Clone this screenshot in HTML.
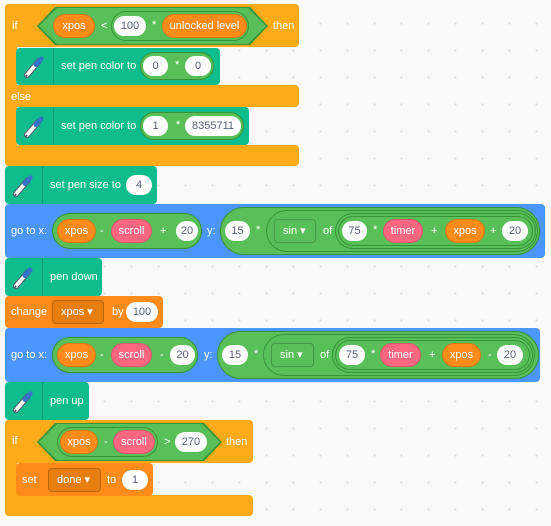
<!DOCTYPE html><html><head><meta charset="utf-8"><style>
body{margin:0;width:551px;height:526px;overflow:hidden;background:#F9F9F9;background-image:radial-gradient(#ddd 1px,transparent 1.2px);background-size:27px 27px;background-position:10px 10px;font-family:"Liberation Sans",sans-serif;position:relative}
div{position:absolute;box-sizing:border-box}
.t{color:#fff;font-size:11px;transform:translateY(-50%);white-space:nowrap}
.w{height:20px;border-radius:10px;background:#fff;color:#575E75;font-size:11px;text-align:center;line-height:20px;transform:translateY(-50%)}
.r{height:24px;border-radius:12px;color:#fff;font-size:11px;text-align:center;line-height:22px;transform:translateY(-50%);border:1px solid rgba(0,0,0,.15)}
.o{background:#FF8C1A}.p{background:#FF6680}
.g{background:#59C059;border:1px solid #389438;transform:translateY(-50%)}
.dd{height:24px;border-radius:4px;border:1px solid rgba(0,0,0,.2);color:#fff;font-size:11px;line-height:22px;padding-left:8px;transform:translateY(-50%)}
.ctl{background:#FFAB19;border-radius:4px}
.pen{background:#0FBD8C;border-radius:4px}
.blu{background:#4C97FF;border-radius:4px}
.var{background:#FF8C1A;border-radius:4px}
.sep{width:1px;background:rgba(0,0,0,.15)}
</style></head><body>
<!-- IF 1 -->
<div class="ctl" style="left:5px;top:4px;width:294px;height:43px"></div>
<div class="ctl" style="left:5px;top:4px;width:12px;height:162px;border-radius:4px 0 0 4px"></div>
<div class="ctl" style="left:5px;top:85px;width:294px;height:22px"></div>
<div class="ctl" style="left:5px;top:145px;width:294px;height:21px"></div>
<div class="t" style="left:12px;top:26px">if</div>
<div style="left:37px;top:7px;width:231px;height:38px;background:#389438;clip-path:polygon(0 50%,18px 0,calc(100% - 18px) 0,100% 50%,calc(100% - 18px) 100%,18px 100%)"></div>
<div style="left:39px;top:8px;width:227px;height:36px;background:#59C059;clip-path:polygon(0 50%,18px 0,calc(100% - 18px) 0,100% 50%,calc(100% - 18px) 100%,18px 100%)"></div>
<div class="r o" style="left:53px;top:26px;width:42px">xpos</div>
<div class="t" style="left:101px;top:26px">&lt;</div>
<div class="g" style="left:111px;top:26px;width:138px;height:30px;border-radius:15px"></div>
<div class="w" style="left:114px;top:26px;width:32px">100</div>
<div class="t" style="left:152px;top:25px">*</div>
<div class="r o" style="left:162px;top:26px;width:85px">unlocked level</div>
<div class="t" style="left:273px;top:26px">then</div>
<!-- teal1 -->
<div class="pen" style="left:16px;top:48px;width:204px;height:37px"></div>
<div class="sep" style="left:53px;top:48px;height:37px"></div>
<div class="t" style="left:61px;top:66px">set pen color to</div>
<div class="g" style="left:140px;top:66px;width:74px;height:28px;border-radius:14px"></div>
<div class="w" style="left:143px;top:66px;width:25px">0</div>
<div class="t" style="left:175px;top:65px">*</div>
<div class="w" style="left:185px;top:66px;width:26px">0</div>
<div class="t" style="left:11px;top:97px">else</div>
<!-- teal2 -->
<div class="pen" style="left:16px;top:107px;width:233px;height:38px"></div>
<div class="sep" style="left:53px;top:107px;height:38px"></div>
<div class="t" style="left:61px;top:126px">set pen color to</div>
<div class="g" style="left:140px;top:126px;width:104px;height:28px;border-radius:14px"></div>
<div class="w" style="left:143px;top:126px;width:25px">1</div>
<div class="t" style="left:176px;top:125px">*</div>
<div class="w" style="left:185px;top:126px;width:56px">8355711</div>
<!-- pen size -->
<div class="pen" style="left:5px;top:166px;width:152px;height:38px"></div>
<div class="sep" style="left:42px;top:166px;height:38px"></div>
<div class="t" style="left:50px;top:185px">set pen size to</div>
<div class="w" style="left:126px;top:185px;width:26px">4</div>
<!-- blue1 -->
<div class="blu" style="left:5px;top:204px;width:540px;height:54px"></div>
<div class="t" style="left:11px;top:231px">go to x:</div>
<div class="g" style="left:52px;top:231px;width:150px;height:36px;border-radius:18px"></div>
<div class="r o" style="left:57px;top:231px;width:39px">xpos</div>
<div class="t" style="left:100px;top:231px">-</div>
<div class="r p" style="left:111px;top:231px;width:41px">scroll</div>
<div class="t" style="left:160px;top:231px">+</div>
<div class="w" style="left:176px;top:231px;width:22px">20</div>
<div class="t" style="left:207px;top:231px">y:</div>
<div class="g" style="left:220px;top:231px;width:320px;height:48px;border-radius:24px"></div>
<div class="w" style="left:225px;top:231px;width:25px">15</div>
<div class="t" style="left:256px;top:230px">*</div>
<div class="g" style="left:266px;top:231px;width:272px;height:42px;border-radius:21px"></div>
<div class="dd" style="left:274px;top:231px;width:42px">sin ▾</div>
<div class="t" style="left:323px;top:231px">of</div>
<div class="g" style="left:335px;top:231px;width:201px;height:36px;border-radius:18px"></div>
<div class="g" style="left:338px;top:231px;width:195px;height:30px;border-radius:15px"></div>
<div class="w" style="left:342px;top:231px;width:25px">75</div>
<div class="t" style="left:373px;top:230px">*</div>
<div class="r p" style="left:383px;top:231px;width:40px">timer</div>
<div class="t" style="left:431px;top:231px">+</div>
<div class="r o" style="left:445px;top:231px;width:40px">xpos</div>
<div class="t" style="left:490px;top:231px">+</div>
<div class="w" style="left:502px;top:231px;width:26px">20</div>
<!-- pen down -->
<div class="pen" style="left:5px;top:258px;width:97px;height:38px"></div>
<div class="sep" style="left:42px;top:258px;height:38px"></div>
<div class="t" style="left:50px;top:277px">pen down</div>
<!-- change -->
<div class="var" style="left:5px;top:296px;width:158px;height:32px"></div>
<div class="t" style="left:11px;top:312px">change</div>
<div class="dd" style="left:52px;top:312px;width:52px;background:#E67F0F">xpos ▾</div>
<div class="t" style="left:112px;top:312px">by</div>
<div class="w" style="left:126px;top:312px;width:32px">100</div>
<!-- blue2 -->
<div class="blu" style="left:5px;top:328px;width:535px;height:54px"></div>
<div class="t" style="left:11px;top:355px">go to x:</div>
<div class="g" style="left:52px;top:355px;width:146px;height:36px;border-radius:18px"></div>
<div class="r o" style="left:57px;top:355px;width:39px">xpos</div>
<div class="t" style="left:100px;top:355px">-</div>
<div class="r p" style="left:111px;top:355px;width:41px">scroll</div>
<div class="t" style="left:160px;top:355px">-</div>
<div class="w" style="left:170px;top:355px;width:25px">20</div>
<div class="t" style="left:204px;top:355px">y:</div>
<div class="g" style="left:217px;top:355px;width:322px;height:48px;border-radius:24px"></div>
<div class="w" style="left:222px;top:355px;width:26px">15</div>
<div class="t" style="left:254px;top:354px">*</div>
<div class="g" style="left:263px;top:355px;width:272px;height:42px;border-radius:21px"></div>
<div class="dd" style="left:271px;top:355px;width:43px">sin ▾</div>
<div class="t" style="left:320px;top:355px">of</div>
<div class="g" style="left:332px;top:355px;width:201px;height:36px;border-radius:18px"></div>
<div class="g" style="left:335px;top:355px;width:195px;height:30px;border-radius:15px"></div>
<div class="w" style="left:339px;top:355px;width:26px">75</div>
<div class="t" style="left:371px;top:354px">*</div>
<div class="r p" style="left:380px;top:355px;width:41px">timer</div>
<div class="t" style="left:429px;top:355px">+</div>
<div class="r o" style="left:442px;top:355px;width:39px">xpos</div>
<div class="t" style="left:488px;top:355px">-</div>
<div class="w" style="left:497px;top:355px;width:26px">20</div>
<!-- pen up -->
<div class="pen" style="left:5px;top:382px;width:84px;height:38px"></div>
<div class="sep" style="left:42px;top:382px;height:38px"></div>
<div class="t" style="left:50px;top:401px">pen up</div>
<!-- IF 2 -->
<div class="ctl" style="left:5px;top:420px;width:248px;height:43px"></div>
<div class="ctl" style="left:5px;top:420px;width:12px;height:96px;border-radius:4px 0 0 4px"></div>
<div class="ctl" style="left:5px;top:495px;width:248px;height:21px"></div>
<div class="t" style="left:12px;top:441px">if</div>
<div style="left:37px;top:423px;width:185px;height:38px;background:#389438;clip-path:polygon(0 50%,18px 0,calc(100% - 18px) 0,100% 50%,calc(100% - 18px) 100%,18px 100%)"></div>
<div style="left:39px;top:424px;width:181px;height:36px;background:#59C059;clip-path:polygon(0 50%,18px 0,calc(100% - 18px) 0,100% 50%,calc(100% - 18px) 100%,18px 100%)"></div>
<div class="g" style="left:57px;top:442px;width:101px;height:30px;border-radius:15px"></div>
<div class="r o" style="left:60px;top:442px;width:38px">xpos</div>
<div class="t" style="left:104px;top:442px">-</div>
<div class="r p" style="left:113px;top:442px;width:42px">scroll</div>
<div class="t" style="left:164px;top:442px">&gt;</div>
<div class="w" style="left:175px;top:442px;width:32px">270</div>
<div class="t" style="left:226px;top:442px">then</div>
<div class="var" style="left:16px;top:463px;width:137px;height:33px"></div>
<div class="t" style="left:22px;top:480px">set</div>
<div class="dd" style="left:48px;top:480px;width:53px;background:#E67F0F">done ▾</div>
<div class="t" style="left:107px;top:480px">to</div>
<div class="w" style="left:122px;top:480px;width:26px">1</div>
<!-- pen icons -->
<svg style="position:absolute;left:0;top:0" width="551" height="526">
<defs><g id="pi">
<path d="M5 21 L17 7" stroke="#575E75" stroke-width="6" stroke-linecap="round"/>
<path d="M5 21 L17 7" stroke="#fff" stroke-width="4" stroke-linecap="round"/>
<path d="M14 10.5 L19 5" stroke="#3373CC" stroke-width="5" stroke-linecap="round"/>
<path d="M3.5 23 L5 21" stroke="#575E75" stroke-width="2"/>
</g></defs>
<use href="#pi" x="22" y="54"/><use href="#pi" x="22" y="114"/><use href="#pi" x="11" y="173"/><use href="#pi" x="11" y="265"/><use href="#pi" x="11" y="389"/>
</svg>
</body></html>
